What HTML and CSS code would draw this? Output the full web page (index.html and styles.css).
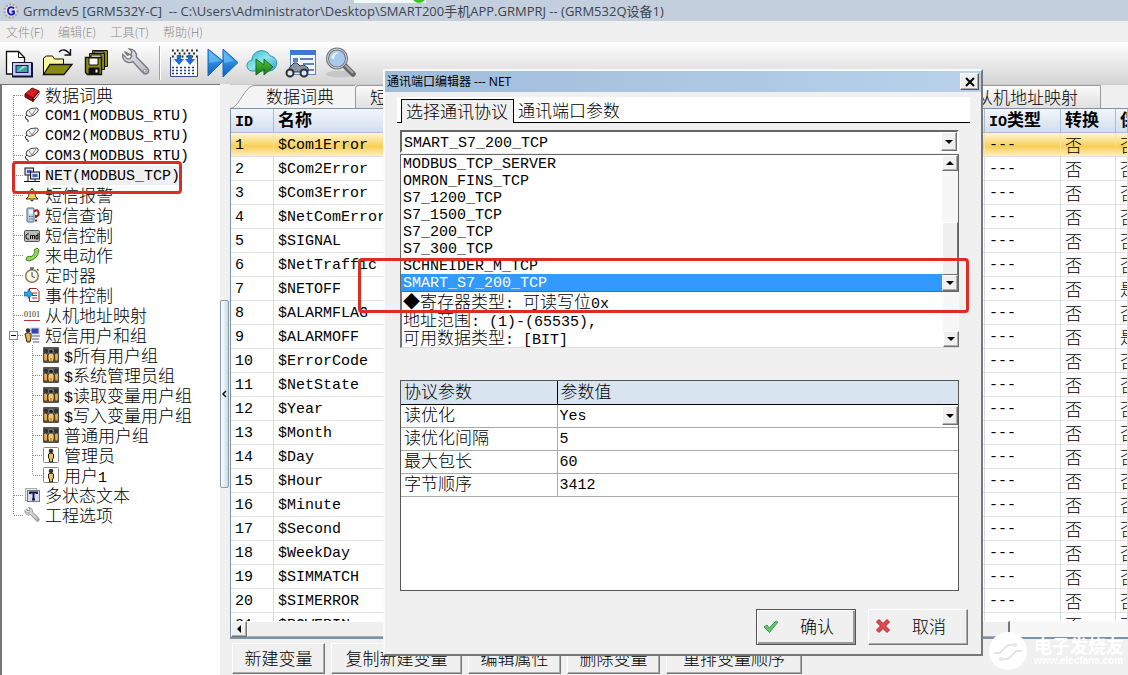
FILE: index.html
```html
<!DOCTYPE html>
<html lang="zh-CN">
<head>
<meta charset="utf-8">
<title>Grmdev5 [GRM532Y-C]</title>
<link rel="stylesheet" href="styles.css">
</head>
<body>
<svg class="defs" aria-hidden="true">
  <defs>
    <linearGradient id="blue" x1="0" y1="0" x2="0" y2="1"><stop offset="0" stop-color="#4fb0f5"/><stop offset="1" stop-color="#0a5fc0"/></linearGradient>
    <linearGradient id="cloud" x1="0" y1="0" x2="1" y2="1"><stop offset="0" stop-color="#25bccb"/><stop offset=".5" stop-color="#8fe4ea"/><stop offset="1" stop-color="#2f9fd0"/></linearGradient>
    <linearGradient id="green" x1="0" y1="0" x2="0" y2="1"><stop offset="0" stop-color="#5fc040"/><stop offset="1" stop-color="#0f7a18"/></linearGradient>
    <linearGradient id="metal" x1="0" y1="0" x2="1" y2="1"><stop offset="0" stop-color="#e8e8ee"/><stop offset="1" stop-color="#b8b8c0"/></linearGradient>
  </defs>
  <symbol id="plug" viewBox="0 0 16 16"><path d="M2 7l1-3 4-2.500 6-.5 1.500 2-2 3-3.500 2.500-4 1z" fill="#f2f2f2" stroke="#333" stroke-width=".9"/><path d="M5 4l3 4M12 2L8 8" stroke="#888" fill="none"/><path d="M3 8Q0 9.500 2 12l2 1v2" fill="none" stroke="#222"/></symbol>
  <symbol id="group" viewBox="0 0 16 16"><rect width="16" height="16" rx="1" fill="#555"/><path d="M.5 7.500q2-3 4 0v6.500H1zM11.500 7.500q2-3 4 0L15 14h-3z" fill="#e3ad55" stroke="#3a2a10" stroke-width=".7"/><path d="M5 8q3-4 6 0v4l-1 3H6l-1-3z" fill="#f5c66c" stroke="#3a2a10" stroke-width=".7"/><path d="M8 11v4" stroke="#6a4a18" stroke-width=".8"/><circle cx="3" cy="4" r="2.200" fill="#333"/><circle cx="13" cy="4" r="2.200" fill="#333"/><circle cx="8" cy="4.500" r="2.300" fill="#222" stroke="#aaa" stroke-width=".6"/></symbol>
  <symbol id="person" viewBox="0 0 16 16"><rect x=".5" y=".5" width="15" height="15" rx="1" fill="#fff" stroke="#888"/><path d="M5.500 7q2.500-2 5 0v4l-1 1v3h-3v-3l-1-1z" fill="#f0bd5e" stroke="#2a1e08"/><circle cx="8" cy="4" r="2.300" fill="#333"/></symbol>
  <symbol id="wrench" viewBox="0 0 32 32"><path d="M4 4l5 3 2 0 1-3-3-3c5 0 9 4 8 9l12 12c4 5-2 9-5 5L13 15C8 18 1 14 2 7l5 5 3 0 2-3-2-2-3 1z" fill="url(#metal)" stroke="#77777f" stroke-width="1.500"/><circle cx="26" cy="25" r="1.500" fill="#fff" stroke="#777"/></symbol>
</svg>

<header class="titlebar">
  <svg class="ico16" viewBox="0 0 16 16"><circle cx="8" cy="8" r="6.500" fill="#dce3f2" stroke="#b3a58c" stroke-width="2" stroke-dasharray="2 1.500"/><path d="M11 5.500C8 2.500 4.500 5 5 8.500s4 4 6 2V8.500H8.500" fill="none" stroke="#1414c8" stroke-width="1.800"/></svg>
  <h1 class="title">Grmdev5 [GRM532Y-C]  -- C:\Users\Administrator\Desktop\SMART200手机APP.GRMPRJ -- (GRM532Q设备1)</h1>
  <span class="floatbar"><span class="dot"></span></span>
</header>

<nav class="menubar">
  <button class="menu">文件(F)</button><button class="menu">编辑(E)</button><button class="menu">工具(T)</button><button class="menu">帮助(H)</button>
</nav>

<div class="toolbar">
  <button class="tool" aria-label="新建"><svg viewBox="0 0 32 32"><path d="M3.500 4.500h12l6 6V27h-18z" fill="#fff" stroke="#111" stroke-width="1.300"/><path d="M15.500 4.500v6h6" fill="none" stroke="#111"/><rect x="9.500" y="15.500" width="19" height="14" fill="#c8ccf0" stroke="#14143c"/><path d="M9 29.500h20v-14" stroke="#11113a" stroke-width="2" fill="none"/><rect x="13" y="18.500" width="12" height="7" fill="#3aa79c" stroke="#14146c"/><path d="M14 25l6-6h4z" fill="#a9e4dd"/></svg></button>
  <button class="tool" aria-label="打开"><svg viewBox="0 0 32 32"><path d="M1.500 27V11l3-2h6l2 3h9v6" fill="#fff6a0" stroke="#111"/><path d="M1.500 27.500L8 17.500h22l-8 10z" fill="#8b8b14" stroke="#111" stroke-width="1.300"/><path d="M17 5q5-5 11 2M28.500 2v6h-6" fill="none" stroke="#111" stroke-width="1.400"/></svg></button>
  <button class="tool" aria-label="全部保存"><svg viewBox="0 0 32 32"><g stroke="#111" fill="#8b8b14"><path d="M11.500 3.500h15v16h-15z"/><path d="M13 5h10v6H13z" fill="#fff"/><path d="M8.500 6.500h15v16h-15z"/><path d="M10 8h10v6H10z" fill="#fff"/><path d="M4.500 10.500h16v17h-14l-2-2z" stroke-width="1.400"/><path d="M8 11h9v7H8z" fill="#fff"/><path d="M8 21h10v6H8z" fill="#111"/><path d="M14 22h3v4h-3z" fill="#fff"/></g></svg></button>
  <button class="tool" aria-label="工具"><svg viewBox="0 0 32 32"><use href="#wrench" x="0" y="1" width="31" height="29"/></svg></button>
  <span class="sep"></span>
  <button class="tool" aria-label="编译"><svg viewBox="0 0 32 32"><rect x="2" y="15" width="27" height="14" fill="#fff"/><path d="M2.500 10v19.500h27V10" fill="none" stroke="#334a88"/><path d="M4 3.500h26M6 6.500h24M4 9.500h26" stroke="#222" stroke-width="1.800" stroke-dasharray="1.800 3"/><path d="M4 20.500h24M4 23.500h24M4 26.500h24" stroke="#1c3c88" stroke-width="1.600" stroke-dasharray="2 2"/><path d="M9 8h4v4h3l-5 6-5-6h3zM20 8h4v4h3l-5 6-5-6h3z" fill="#2269d8"/></svg></button>
  <button class="tool" aria-label="下载"><svg viewBox="0 0 32 32"><path d="M1 2l15 12L1 29zM16 2l15 13.500L16 30z" fill="url(#blue)" stroke="#1768bd"/><path d="M2 4l12 10-12 2zM17 5l10 9-10 2z" fill="#73c8ff" opacity=".6"/></svg></button>
  <button class="tool" aria-label="云下载"><svg viewBox="0 0 32 32"><path d="M8 24C-1 25-1 14 6 13 6 3 20 0 24 9c9 1 9 13 0 15z" fill="url(#cloud)" stroke="#2d93ad"/><path d="M10 12l8 6v-6l9 8-9 8v-6l-8 6z" fill="url(#green)" stroke="#176a18"/></svg></button>
  <button class="tool" aria-label="监视"><svg viewBox="0 0 32 32"><rect x="5.500" y="3.500" width="25" height="24" fill="#f3f7ff" stroke="#5b83c0"/><path d="M5 3h26v5H5z" fill="#3f78cc"/><path d="M8 11h5v4H8zM15 11h13v2H15zM18 16h11v2H18zM21 22h8v2h-8z" fill="#5b83c0"/><path d="M5 20l4-4h3l3 3 4-1 4 3v4H3z" fill="#8a94a2" stroke="#333c48"/><circle cx="5" cy="26" r="3.500" fill="#dce6f4" stroke="#2c3038" stroke-width="2"/><circle cx="19" cy="26" r="3.500" fill="#dce6f4" stroke="#2c3038" stroke-width="2"/></svg></button>
  <button class="tool" aria-label="查找"><svg viewBox="0 0 32 32"><ellipse cx="16" cy="27" rx="14" ry="3.500" fill="#bbb" opacity=".7"/><path d="M20 18l9 9" stroke="#666" stroke-width="5.500" stroke-linecap="round"/><path d="M20 17l9 9" stroke="#aaa" stroke-width="2"/><circle cx="13" cy="11.500" r="9.500" fill="#a9c8ec" stroke="#72777f" stroke-width="3"/><circle cx="13" cy="11.500" r="9.500" fill="none" stroke="#d6d9dd"/><path d="M7 10.500q2-6 8-5-5 2-5 7z" fill="#e4f2ff"/></svg></button>
</div>

<main class="work">
  <nav class="side">
    <ul class="tree">
      <li class="node"><span class="stem first"></span><svg class="ico16" viewBox="0 0 16 16"><path d="M1 7l7-6 7 3-6 7z" fill="#dc2020" stroke="#7a0c0c"/><path d="M1 7l8 4v3.500L1 10zM9 11l6-7v3l-6 7.500z" fill="#a01010" stroke="#600"/><path d="M10 12l5-6" stroke="#fff"/></svg>数据词典</li>
      <li class="node"><span class="stem"></span><svg class="ico16"><use href="#plug"/></svg><span class="lat">COM1(MODBUS_RTU)</span></li>
      <li class="node"><span class="stem"></span><svg class="ico16"><use href="#plug"/></svg><span class="lat">COM2(MODBUS_RTU)</span></li>
      <li class="node"><span class="stem"></span><svg class="ico16"><use href="#plug"/></svg><span class="lat">COM3(MODBUS_RTU)</span></li>
      <li class="node"><span class="stem"></span><svg class="ico16" viewBox="0 0 16 16"><rect x="1" y="1" width="8.500" height="7" fill="#dde" stroke="#111"/><rect x="3" y="3" width="4.500" height="3" fill="#3a62d8"/><rect x="6.500" y="5" width="9" height="7" fill="#dde" stroke="#111"/><rect x="8.500" y="7" width="5" height="3" fill="#3a62d8"/><path d="M4 8v6M11 12v2M0 14.500h16" stroke="#111"/></svg><span class="lat current">NET(MODBUS_TCP)</span></li>
      <li class="node"><span class="stem"></span><svg class="ico16" viewBox="0 0 16 16"><path d="M8 2Q5 3 5 7q0 3-3 5h12q-3-2-3-5 0-4-3-5z" fill="#f5cf5a" stroke="#4a3505"/><path d="M8 1v2M6.500 13q1.500 2 3 0" stroke="#333" fill="#333"/></svg>短信报警</li>
      <li class="node"><span class="stem"></span><svg class="ico16" viewBox="0 0 16 16"><rect x="3" y="1" width="7" height="14" rx="1" fill="#b9d3e6" stroke="#47667e"/><path d="M5 3h4v4H5z" fill="#eaf6ff"/><path d="M5 9.500h4M5 12h4" stroke="#47667e" stroke-dasharray="1 .6"/><path d="M10 4.500q4-3 4.500 1T12 9v2M12 12.500v2" stroke="#a5161c" stroke-width="2" fill="none"/></svg>短信查询</li>
      <li class="node"><span class="stem"></span><svg class="ico16" viewBox="0 0 16 16"><rect x=".5" y="3.500" width="15" height="11" rx="1" fill="#bbb" stroke="#555"/><path d="M5 7H3L2 8v3l1 1h2M6.500 12V8.500h2V12M8.500 8.500h2V12M14 6v6h-2V8.500h2" fill="none" stroke="#111"/></svg>短信控制</li>
      <li class="node"><span class="stem"></span><svg class="ico16" viewBox="0 0 16 16"><path d="M10 3l3-2 2 2q-1 9-10 11l-3-1 1-3 3-1 1 1q3-2 4-5z" fill="#9bd65c" stroke="#3f8b1e"/></svg>来电动作</li>
      <li class="node"><span class="stem"></span><svg class="ico16" viewBox="0 0 16 16"><circle cx="8" cy="9" r="6.300" fill="#fdf6dc" stroke="#7d7460" stroke-width="1.400"/><path d="M6 1h4M8 1v2M13 2l1.500 1.500" stroke="#555" stroke-width="1.500"/><path d="M8 5v4.500l3 1" fill="none" stroke="#264a8a"/></svg>定时器</li>
      <li class="node"><span class="stem"></span><svg class="ico16" viewBox="0 0 16 16"><path d="M5.500 1.500h7l2.500 3v10H5.500z" fill="#fff" stroke="#7a2a2a"/><path d="M8 6h5M8 8.500h5M8 11h5" stroke="#b22"/><path d="M0 5h4V2.500l5 4.500-5 4.500V9H0z" fill="#29a5ea" stroke="#14549a" stroke-width=".7"/></svg>事件控制</li>
      <li class="node"><span class="stem"></span><span class="bits">0101</span>从机地址映射</li>
      <li class="node"><span class="stem"><button class="expander" aria-label="折叠"></button></span><svg class="ico16" viewBox="0 0 16 16"><rect x="7" y="1" width="8" height="6" fill="#3342bd" stroke="#ccd"/><path d="M8 9h8M8 12h7M9 15h6" stroke="#888fa8" stroke-width="1.600"/><path d="M1 7q3-3 6 0v4l-1 4H3l-1-4z" fill="#e9b457" stroke="#2b1f08"/><circle cx="4" cy="3.500" r="2.300" fill="#333"/></svg>短信用户和组
        <ul class="branch">
          <li class="node"><span class="stem"></span><svg class="ico16"><use href="#group"/></svg><span><span class="lat">$</span>所有用户组</span></li>
          <li class="node"><span class="stem"></span><svg class="ico16"><use href="#group"/></svg><span><span class="lat">$</span>系统管理员组</span></li>
          <li class="node"><span class="stem"></span><svg class="ico16"><use href="#group"/></svg><span><span class="lat">$</span>读取变量用户组</span></li>
          <li class="node"><span class="stem"></span><svg class="ico16"><use href="#group"/></svg><span><span class="lat">$</span>写入变量用户组</span></li>
          <li class="node"><span class="stem"></span><svg class="ico16"><use href="#group"/></svg>普通用户组</li>
          <li class="node"><span class="stem"></span><svg class="ico16"><use href="#person"/></svg>管理员</li>
          <li class="node"><span class="stem last"></span><svg class="ico16"><use href="#person"/></svg><span>用户<span class="lat">1</span></span></li>
        </ul>
      </li>
      <li class="node"><span class="stem"></span><svg class="ico16" viewBox="0 0 16 16"><rect x="1.500" y="1.500" width="11" height="12" fill="#eee" stroke="#aaa"/><rect x="3.500" y="3.500" width="12" height="11" fill="#d8dcea" stroke="#777"/><path d="M6 7V5.500h7V7M9.500 5.500v7M8 12.500h3" stroke="#10104c" stroke-width="1.800" fill="none"/></svg>多状态文本</li>
      <li class="node"><span class="stem last"></span><svg class="ico16"><use href="#wrench"/></svg>工程选项</li>
    </ul>
  </nav>

  <div class="splitter"><button class="grip" aria-label="收起"><svg viewBox="0 0 6 8"><path d="M5 1L2 4l3 3" fill="none" stroke="#111" stroke-width="1.500"/></svg></button></div>

  <section class="content">
    <div class="tabs">
      <button class="tab active"><svg class="slant" viewBox="0 0 30 24"><path d="M0 23.500C8 23 12 8 20 2q2-1.500 5-1.500h5V24H0z" fill="#f4f4f4"/><path d="M0 23.500C8 23 12 8 20 2q2-1.500 5-1.500h5" fill="none" stroke="#9a9a9a"/></svg><span class="tabtext">数据词典</span></button>
      <button class="tab second">短信报警</button>
      <button class="tab final">从机地址映射</button>
    </div>
    <div class="gridbox">
      <div class="gridclip">
      <table class="grid">
        <colgroup><col class="c-id"><col><col class="c-io"><col class="c-conv"><col class="c-keep"></colgroup>
        <thead><tr><th><span class="lat">ID</span></th><th>名称</th><th><span class="lat">IO</span>类型</th><th>转换</th><th>保持</th></tr></thead>
        <tbody>
        <tr class="hot"><td>1</td><td>$Com1Error</td><td>---</td><td class="zh">否</td><td class="zh">否</td></tr>
        <tr><td>2</td><td>$Com2Error</td><td>---</td><td class="zh">否</td><td class="zh">否</td></tr>
        <tr><td>3</td><td>$Com3Error</td><td>---</td><td class="zh">否</td><td class="zh">否</td></tr>
        <tr><td>4</td><td>$NetComError</td><td>---</td><td class="zh">否</td><td class="zh">否</td></tr>
        <tr><td>5</td><td>$SIGNAL</td><td>---</td><td class="zh">否</td><td class="zh">否</td></tr>
        <tr><td>6</td><td>$NetTraffic</td><td>---</td><td class="zh">否</td><td class="zh">否</td></tr>
        <tr><td>7</td><td>$NETOFF</td><td>---</td><td class="zh">否</td><td class="zh">是</td></tr>
        <tr><td>8</td><td>$ALARMFLAG</td><td>---</td><td class="zh">否</td><td class="zh">否</td></tr>
        <tr><td>9</td><td>$ALARMOFF</td><td>---</td><td class="zh">否</td><td class="zh">是</td></tr>
        <tr><td>10</td><td>$ErrorCode</td><td>---</td><td class="zh">否</td><td class="zh">否</td></tr>
        <tr><td>11</td><td>$NetState</td><td>---</td><td class="zh">否</td><td class="zh">否</td></tr>
        <tr><td>12</td><td>$Year</td><td>---</td><td class="zh">否</td><td class="zh">否</td></tr>
        <tr><td>13</td><td>$Month</td><td>---</td><td class="zh">否</td><td class="zh">否</td></tr>
        <tr><td>14</td><td>$Day</td><td>---</td><td class="zh">否</td><td class="zh">否</td></tr>
        <tr><td>15</td><td>$Hour</td><td>---</td><td class="zh">否</td><td class="zh">否</td></tr>
        <tr><td>16</td><td>$Minute</td><td>---</td><td class="zh">否</td><td class="zh">否</td></tr>
        <tr><td>17</td><td>$Second</td><td>---</td><td class="zh">否</td><td class="zh">否</td></tr>
        <tr><td>18</td><td>$WeekDay</td><td>---</td><td class="zh">否</td><td class="zh">否</td></tr>
        <tr><td>19</td><td>$SIMMATCH</td><td>---</td><td class="zh">否</td><td class="zh">否</td></tr>
        <tr><td>20</td><td>$SIMERROR</td><td>---</td><td class="zh">否</td><td class="zh">否</td></tr>
        <tr><td>21</td><td>$POWERIN</td><td>---</td><td class="zh">否</td><td class="zh">否</td></tr>
        </tbody>
      </table>
      </div>
      <div class="hscroll"><button class="sbtn" aria-label="向左"><svg viewBox="0 0 8 8"><path d="M6 0v8L2 4z"/></svg></button><span class="hthumb"></span><span class="htrack"></span></div>
    </div>
    <div class="actions">
      <button class="btn w4">新建变量</button><button class="btn w6">复制新建变量</button><button class="btn w4">编辑属性</button><button class="btn w4">删除变量</button><button class="btn w7">重排变量顺序</button>
    </div>
  </section>
</main>

<section class="dialog" role="dialog" aria-labelledby="dlg-title">
  <div class="dlg-head"><h2 class="dlg-title" id="dlg-title">通讯端口编辑器 --- NET</h2><button class="close" aria-label="关闭"><svg viewBox="0 0 10 10"><path d="M1 1l8 8M9 1L1 9" stroke="#000" stroke-width="2"/></svg></button></div>
  <div class="dlg-body">
    <div class="dlg-tabs"><button class="dlg-tab on">选择通讯协议</button><button class="dlg-tab">通讯端口参数</button></div>
    <div class="fields">
      <div class="combo"><select class="pick" aria-label="通讯协议"><option>SMART_S7_200_TCP</option></select><span class="sbtn"><svg viewBox="0 0 8 8"><path d="M0 2h8L4 6z"/></svg></span></div>
      <div class="drop">
        <ul class="options" role="listbox" aria-label="通讯协议列表">
          <li role="option">MODBUS_TCP_SERVER</li><li role="option">OMRON_FINS_TCP</li><li role="option">S7_1200_TCP</li><li role="option">S7_1500_TCP</li><li role="option">S7_200_TCP</li><li role="option">S7_300_TCP</li><li role="option">SCHNEIDER_M_TCP</li><li role="option" aria-selected="true" class="sel">SMART_S7_200_TCP</li>
        </ul>
        <div class="vscroll"><button class="sbtn" aria-label="向上"><svg viewBox="0 0 8 8"><path d="M0 6h8L4 2z"/></svg></button><span class="vthumb"></span><button class="sbtn" aria-label="向下"><svg viewBox="0 0 8 8"><path d="M0 2h8L4 6z"/></svg></button></div>
      </div>
      <div class="info">
        <div class="info-text"><p>◆寄存器类型<span class="lat">: </span>可读写位<span class="lat">0x</span></p><p>地址范围<span class="lat">: (1)-(65535),</span></p><p>可用数据类型<span class="lat">: [BIT]</span></p></div>
        <div class="vscroll end"><button class="sbtn" aria-label="向下"><svg viewBox="0 0 8 8"><path d="M0 2h8L4 6z"/></svg></button></div>
      </div>
      <div class="parambox">
        <table class="params">
          <colgroup><col class="c-name"><col></colgroup>
          <thead><tr><th>协议参数</th><th>参数值</th></tr></thead>
          <tbody>
            <tr><td><label for="p1">读优化</label></td><td><div class="cell"><select class="pick" id="p1"><option>Yes</option></select><span class="sbtn"><svg viewBox="0 0 8 8"><path d="M0 2h8L4 6z"/></svg></span></div></td></tr>
            <tr><td><label for="p2">读优化间隔</label></td><td><input class="val" id="p2" value="5"></td></tr>
            <tr><td><label for="p3">最大包长</label></td><td><input class="val" id="p3" value="60"></td></tr>
            <tr><td><label for="p4">字节顺序</label></td><td><input class="val" id="p4" value="3412"></td></tr>
          </tbody>
        </table>
      </div>
    </div>
    <div class="dlg-foot">
      <button class="cmd default"><svg class="ico16" viewBox="0 0 16 16"><path d="M1 9l3-2 2 3 7-7 2 1-8.500 10.500z" fill="#63c56d" stroke="#3f9f4b"/></svg><span>确认</span></button>
      <button class="cmd"><svg class="ico16" viewBox="0 0 16 16"><path d="M4 1.500l4 4 4-4L14.500 4l-4 4 4 4-2.500 2.500-4-4-4 4L1.500 12l4-4-4-4z" fill="#e04a4e" stroke="#a92a30"/></svg><span>取消</span></button>
    </div>
  </div>
</section>

<div class="mark mark-net"></div>
<div class="mark mark-proto"></div>
<div class="watermark"><svg viewBox="0 0 40 40"><circle cx="20" cy="20" r="19" fill="#fff"/><path d="M6 22h6l8-8h6M14 28h6l8-8h6" fill="none" stroke="#e6e6e6" stroke-width="2"/><circle cx="27" cy="14" r="2" fill="#e6e6e6"/><circle cx="13" cy="28" r="2" fill="#e6e6e6"/></svg><p class="wm-text"><span class="wm-name">电子发烧友</span><span class="wm-url">www.elecfans.com</span></p></div>
</body>
</html>
```
FILE: styles.css
```css
* { box-sizing: border-box; }
html, body { height: 100%; }
body {
  margin: 0; overflow: hidden; position: relative;
  display: flex; flex-direction: column;
  background: #f0f0f0; color: #000;
  font: 300 17px/20px "Noto Sans CJK SC", sans-serif;
}
button, select, input { font: inherit; color: inherit; margin: 0; padding: 0; border: 0; background: none; border-radius: 0; }
ul, p, h1, h2 { margin: 0; padding: 0; list-style: none; }
svg { display: block; }
.defs { position: absolute; width: 0; height: 0; }
.lat { font-family: "Liberation Mono", monospace; font-size: 15px; line-height: 10px; }
.ico16 { width: 16px; height: 16px; flex: none; }

.titlebar { flex: none; height: 21px; display: flex; align-items: center; gap: 4px; padding-left: 3px; background: #c3cfdd; }
.title { font: 13px/20px "Open Sans", "Noto Sans CJK SC", sans-serif; color: #3c454f; white-space: pre; }
.floatbar { position: absolute; left: 354px; top: 0; width: 72px; height: 3px; overflow: hidden; background: #f4fafa; display: flex; justify-content: flex-end; align-items: flex-end; }
.dot { width: 14px; height: 14px; flex: none; border-radius: 7px; background: #38c81c; }
.menubar { flex: none; height: 21px; display: flex; align-items: center; gap: 14px; padding-left: 6px; background: #f0efef; }
.menu { font-size: 12px; line-height: 18px; color: #8c8c8c; }
.toolbar { flex: none; height: 42px; display: flex; align-items: center; gap: 7px; padding-left: 3px; background: linear-gradient(#fff, #d4d4d4); }
.tool { width: 32px; height: 36px; }
.tool svg { width: 32px; height: 32px; }
.sep { width: 2px; height: 34px; background: #a0a0a0; border-right: 1px solid #fff; }

.work { flex: 1; min-height: 0; display: flex; }
.side { flex: none; width: 220px; background: #fff; border-left: 2px solid #777; border-top: 1px solid #777; }
.tree > .node { padding-left: 7px; }
.node { display: flex; flex-wrap: wrap; align-items: center; column-gap: 5px; min-height: 20px; line-height: 18px; white-space: nowrap; }
.node > .lat { display: block; line-height: 17px; padding-top: 2px; }
.stem {
  width: 15px; height: 20px; margin-right: -5px; display: flex; align-items: center;
  background:
    repeating-linear-gradient(#888 0 1px, transparent 1px 2px) 4px 0 / 1px 100% no-repeat,
    repeating-linear-gradient(90deg, #888 0 1px, transparent 1px 2px) 5px 10px / 10px 1px no-repeat;
}
.stem.first { background-position: 4px 10px, 5px 10px; }
.stem.last { background-size: 1px 10px, 10px 1px; }
.expander { width: 9px; height: 9px; border: 1px solid #888; background: linear-gradient(#000, #000) center / 5px 1px no-repeat #fff; }
.current { background: #f0f0f0; }
.branch { width: 100%; padding-left: 19px; background: repeating-linear-gradient(#888 0 1px, transparent 1px 2px) 4px 0 / 1px 100% no-repeat; }
.bits { width: 16px; font: 8px/10px "Liberation Serif", serif; color: #222; border-bottom: 1px solid #b33; }

.splitter { flex: none; width: 10px; padding-top: 216px; background: #f0f0f0; }
.grip { width: 9px; height: 188px; border: 1px solid #8b9aa5; border-radius: 2px; background: linear-gradient(90deg, #fff, #c8dbe6); }
.grip svg { width: 6px; height: 8px; }

.content { flex: 1; min-width: 0; display: flex; flex-direction: column; }
.tabs { flex: none; height: 24px; display: flex; align-items: stretch; background: #efefef; border-top: 1px solid #c8c8c8; }
.tab { height: 23px; line-height: 20px; border: 1px solid #9a9a9a; border-bottom: 0; background: linear-gradient(#fafafa, #e0e0e0); }
.tab.active { flex: none; width: 125px; display: flex; border: 0; background: none; }
.slant { width: 30px; height: 24px; flex: none; }
.tabtext { flex: 1; align-self: stretch; border-top: 1px solid #9a9a9a; background: #f4f4f4; text-align: left; padding-left: 6px; }
.tab.second { flex: 1; text-align: left; padding-left: 14px; border-top-left-radius: 4px; }
.tab.final { flex: none; width: 148px; margin-right: 27px; padding-right: 22px; text-align: right; border-top-right-radius: 2px; }
.gridbox { flex: 1; min-height: 0; display: flex; flex-direction: column; border: 2px solid #7c93a8; border-width: 1px 0 2px 1px; background: #fff; margin-bottom: 4px; }
.gridclip { flex: 1; min-height: 0; overflow: hidden; }
.grid { width: 100%; table-layout: fixed; border-collapse: separate; border-spacing: 0; font: 15px/20px "Liberation Mono", monospace; }
.c-id { width: 43px; } .c-io { width: 76px; } .c-conv { width: 55px; } .c-keep { width: 12px; }
.grid th { height: 24px; padding: 0 0 0 4px; text-align: left; vertical-align: top; font: bold 17px/20px "Noto Sans CJK SC", sans-serif; background: linear-gradient(#f2f6fb, #d3deec); border-right: 1px solid #a9bdd2; border-bottom: 1px solid #a9bdd2; white-space: nowrap; overflow: hidden; }
.grid td { height: 24px; padding: 2px 0 0 4px; vertical-align: top; border-right: 1px solid #d9dde2; border-bottom: 1px solid #dfe3e8; white-space: nowrap; overflow: hidden; line-height: 21px; }
.grid td.zh { font: 300 17px/20px "Noto Sans CJK SC", sans-serif; padding-top: 0; line-height: 23px; }
.hot td { background: linear-gradient(#fff6d8, #f9d566 50%, #f8cf5c 60%, #fff0bd); border-right-color: #f4e3a8; }
.hscroll { flex: none; height: 16px; display: flex; background: #f7f7f7; }
.hthumb { flex: 1; background: #f0f0f0; border: 1px solid #fff; border-right: 2px solid #777; border-bottom-color: #aaa; }
.htrack { flex: none; width: 118px; }
.sbtn { width: 16px; height: 16px; flex: none; display: flex; align-items: center; justify-content: center; background: #f0f0f0; border: 1px solid; border-color: #fff #707070 #707070 #fff; box-shadow: inset -1px -1px #b0b0b0; }
.sbtn svg { width: 8px; height: 8px; }
.actions { flex: none; display: flex; gap: 6px; padding: 0 0 1px 2px; }
.btn { height: 31px; line-height: 26px; padding-bottom: 2px; border: 1px solid; border-color: #fff #777 #777 #fff; box-shadow: inset -1px -1px #aaa; white-space: nowrap; }
.w4 { width: 93px; } .w6 { width: 131px; } .w7 { width: 136px; }

.dialog { position: absolute; left: 383px; top: 69px; width: 600px; background: #f0f0f0; border: 2px solid; border-color: #fafafa #777 #777 #fafafa; }
.dlg-head { height: 21px; display: flex; align-items: center; justify-content: space-between; padding: 0 2px 0 2px; background: linear-gradient(90deg, #9fbcdc, #b9d1ea); }
.dlg-title { font: 12px/20px "Noto Sans", "Noto Sans CJK SC", sans-serif; }
.close { width: 19px; height: 17px; display: grid; place-items: center; background: #f0f0f0; border: 1px solid; border-color: #fff #555 #555 #fff; box-shadow: inset -1px -1px #aaa; }
.close svg { width: 10px; height: 10px; }
.dlg-body { padding: 5px 11px 9px 12px; }
.dlg-tabs { display: flex; height: 26px; padding: 2px 0 0 4px; background: linear-gradient(#000, #000) 0 100% / 100% 1px no-repeat #fff; }
.dlg-tab { width: 113px; height: 24px; line-height: 20px; padding: 0 0 2px 4px; text-align: left; white-space: nowrap; }
.dlg-tab.on { border: 1px solid #000; border-bottom: 0; background: #f0f0f0; }
.fields { padding: 7px 11px 0 3px; }
.combo { height: 23px; display: flex; background: #fff; border: 2px solid; border-color: #666 #fff #fff #666; }
.pick { flex: 1; height: 100%; min-width: 0; appearance: none; font: 15px/20px "Liberation Mono", monospace; padding: 2px 0 0 2px; outline: 0; }
.combo .sbtn, .cell .sbtn { height: 19px; }
.drop { display: flex; margin-top: 1px; height: 138px; background: #fff; border: 1px solid #666; }
.options { flex: 1; font: 15px/17px "Liberation Mono", monospace; }
.options li { padding: 1px 0 0 2px; height: 17px; }
.options .sel { background: #3399ff; color: #fff; }
.vscroll { width: 16px; display: flex; flex-direction: column; justify-content: space-between; background: #f7f7f7; }
.vthumb { height: 53px; margin-top: auto; background: #f0f0f0; border: 1px solid; border-color: #fff #707070 #707070 #fff; }
.info { display: flex; height: 56px; background: #fff; border-left: 2px solid #777; border-bottom: 1px solid #ddd; }
.info-text { flex: 1; padding: 0 0 0 1px; line-height: 17px; white-space: pre; }
.vscroll.end { justify-content: flex-end; }
.parambox { height: 211px; margin-top: 32px; background: #fff; border: 1px solid #555; }
.params { width: 100%; table-layout: fixed; border-collapse: collapse; }
.c-name { width: 156px; }
.params th { height: 23px; padding: 0 0 0 3px; text-align: left; vertical-align: top; font-weight: 300; line-height: 20px; background: #d8e4f0; border-bottom: 1px solid #000; }
.params th + th { border-left: 1px solid #000; }
.params td { height: 23px; padding: 0 0 0 3px; vertical-align: top; line-height: 18px; border-bottom: 1px solid #aaa; }
.params td + td { padding-left: 2px; border-left: 1px solid #aaa; }
.cell { display: flex; height: 22px; align-items: center; }
.cell .pick { padding-left: 0; }
.val { display: block; width: 100%; height: 22px; padding-top: 2px; font: 15px/20px "Liberation Mono", monospace; outline: 0; }
.dlg-foot { display: flex; justify-content: flex-end; gap: 12px; margin-top: 18px; padding-right: 2px; }
.cmd { width: 100px; height: 36px; display: flex; align-items: center; padding: 0 0 2px 6px; gap: 21px; border: 1px solid; border-color: #fff #777 #777 #fff; box-shadow: inset -1px -1px #aaa; }
.cmd.default { border: 1px solid #555; box-shadow: inset 1px 1px #fff, inset -2px -2px #999; }

.mark { position: absolute; border: 3px solid #dc2c24; border-radius: 4px; }
.mark-net { left: 12px; top: 161px; width: 170px; height: 33px; }
.mark-proto { left: 358px; top: 258px; width: 611px; height: 55px; }
.watermark { position: absolute; right: 4px; bottom: 4px; display: flex; align-items: center; gap: 6px; color: #fff; }
.watermark svg { width: 40px; height: 40px; }
.wm-text { display: flex; flex-direction: column; }
.wm-name { font-size: 18px; line-height: 20px; font-weight: bold; }
.wm-url { font: bold 10px/12px "Liberation Sans", sans-serif; }
```
